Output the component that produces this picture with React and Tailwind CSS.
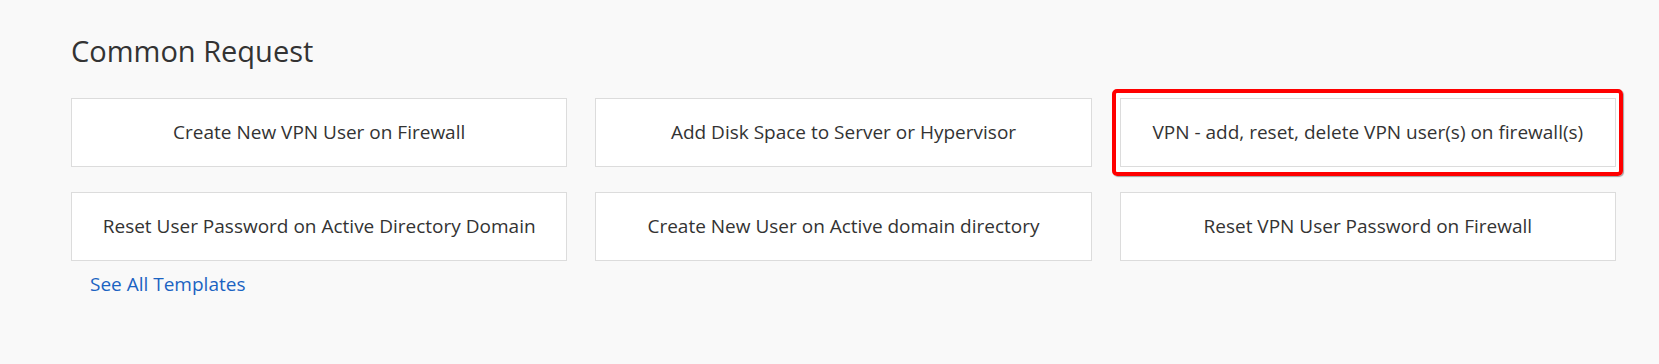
import React from 'react';

const templates = [
  { id: 1, title: 'Create New VPN User on Firewall' },
  { id: 2, title: 'Add Disk Space to Server or Hypervisor' },
  { id: 3, title: 'VPN - add, reset, delete VPN user(s) on firewall(s)', highlighted: true },
  { id: 4, title: 'Reset User Password on Active Directory Domain' },
  { id: 5, title: 'Create New User on Active domain directory' },
  { id: 6, title: 'Reset VPN User Password on Firewall' },
];

const TemplateCard = ({ template }) => (
  <div
    className={`relative flex h-[69px] items-center justify-center border border-[#dcdcdc] bg-white text-[19px] text-[#333] ${
      template.highlighted ? 'shadow-[0_0_0_6px_#ffffff]' : ''
    }`}
  >
    {template.title}
    {/* Red annotation box around the highlighted template */}
    {template.highlighted && (
      <span className="pointer-events-none absolute -top-[10px] -bottom-[10px] -left-[9px] -right-[8px] rounded-[5px] border-4 border-[#ff0000] shadow-[1px_1px_1px_rgba(0,0,0,0.35)]" />
    )}
  </div>
);

export default function App() {
  return (
    <div
      className="h-[364px] w-full bg-[#f9f9f9] pt-[31px] pl-[71px]"
      style={{ fontFamily: '"Open Sans", "Noto Sans", sans-serif' }}
    >
      <h1 className="text-[29px] leading-[39px] font-normal text-[#333]">Common Request</h1>

      <div className="mt-[28px] grid w-[1545px] grid-cols-3 gap-x-[28px] gap-y-[25px]">
        {templates.map((template) => (
          <TemplateCard key={template.id} template={template} />
        ))}
      </div>

      <a href="#" className="ml-[19px] mt-[10px] inline-block text-[19px] leading-[26px] text-[#1b63c2]">
        See All Templates
      </a>
    </div>
  );
}
